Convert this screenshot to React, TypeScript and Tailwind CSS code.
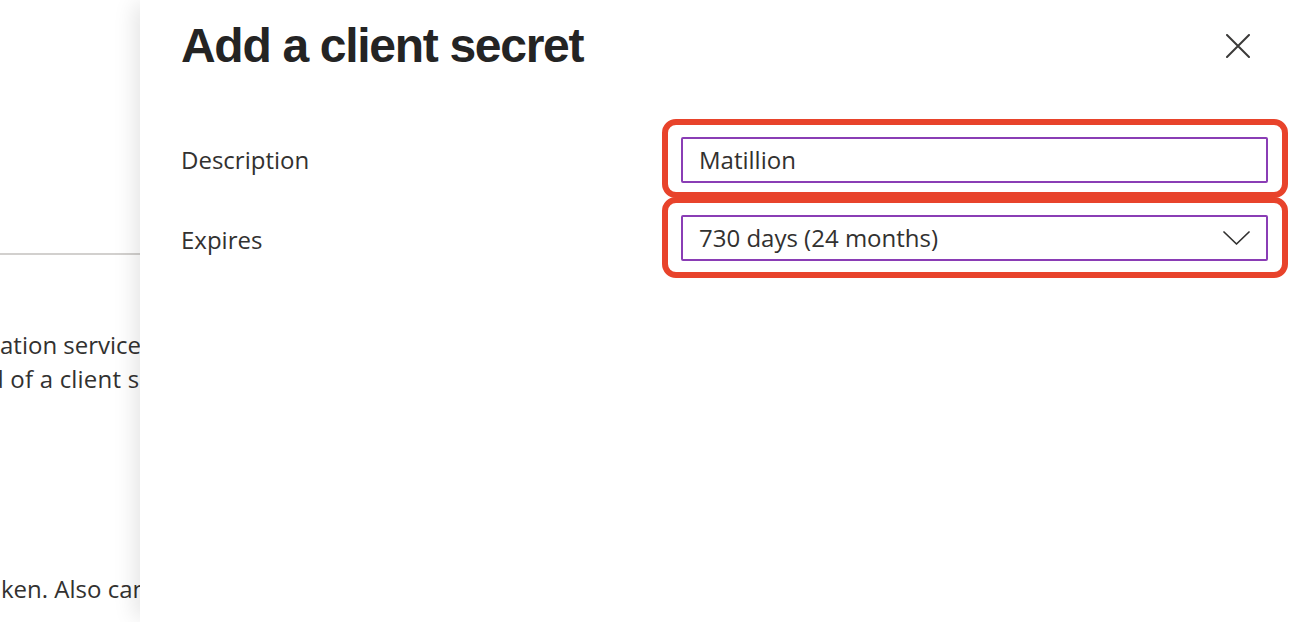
import React from "react";

// Callout wrapper drawn around a form control
const Highlight: React.FC<{ className?: string; children: React.ReactNode }> = ({ className = "", children }) => (
  <div className={`rounded-[14px] border-[6px] border-[#e8432b] pl-[13px] pr-[14px] pt-[12px] pb-[9px] ${className}`}>{children}</div>
);

const CloseIcon = () => (
  <svg width="24" height="24" viewBox="0 0 24 24" fill="none" stroke="#3b3a39" strokeWidth="2" strokeLinecap="round">
    <path d="M1 1L23 23M23 1L1 23" />
  </svg>
);

const Chevron = () => (
  <svg width="27" height="14" viewBox="0 0 27 14" fill="none" stroke="#323130" strokeWidth="1.7" strokeLinecap="round" strokeLinejoin="round">
    <path d="M1 1L13.5 13L26 1" />
  </svg>
);

const App: React.FC = () => {
  return (
    <div className="flex h-[622px] w-[1310px] overflow-hidden bg-white font-['Open_Sans',sans-serif] text-[#323130]">
      {/* app registration page behind the panel */}
      <div className="w-[140px] shrink-0 overflow-hidden">
        <div className="h-[255px] border-b-2 border-[#d2d0ce]" />
        <div className="mt-[73px] text-[24px] leading-[34px] whitespace-nowrap">
          <div>ation service when receiving tokens</div>
          <div className="ml-[-11px] tracking-[0.2px]">d of a client secret) as a credential.</div>
          <div className="mt-[176px] ml-[1px]">ken. Also can be referred to</div>
        </div>
      </div>

      {/* blade: add a client secret */}
      <div className="relative flex-1 bg-white shadow-[-10px_0_20px_-4px_rgba(0,0,0,0.1)]">
        <div className="flex items-start justify-between pl-[41px] pt-[22px]">
          <h1 className="font-['Liberation_Sans',Arial,sans-serif] text-[48px] font-bold leading-[48px] tracking-[-1.3px] text-[#242424]">
            Add a client secret
          </h1>
          <button className="mr-[60px] mt-[12px]" aria-label="Close">
            <CloseIcon />
          </button>
        </div>

        <div className="mt-[49px] grid grid-cols-[481px_626px] pl-[41px]">
          <label className="flex items-center pt-[3px] text-[24px]">Description</label>
          <Highlight className="h-[79px]">
            <div className="flex h-[46px] items-center rounded-[2px] border-2 border-[#8a3db5] pl-[16px] text-[24px]">
              Matillion
            </div>
          </Highlight>

          <label className="flex items-center pt-[3px] text-[24px]">Expires</label>
          <Highlight className="-mt-[1px] h-[81px]">
            <div className="flex h-[46px] items-center justify-between rounded-[2px] border-2 border-[#8a3db5] pl-[16px] pr-[16px] text-[24px]">
              <span>730 days (24 months)</span>
              <Chevron />
            </div>
          </Highlight>
        </div>
      </div>
    </div>
  );
};

export default App;
